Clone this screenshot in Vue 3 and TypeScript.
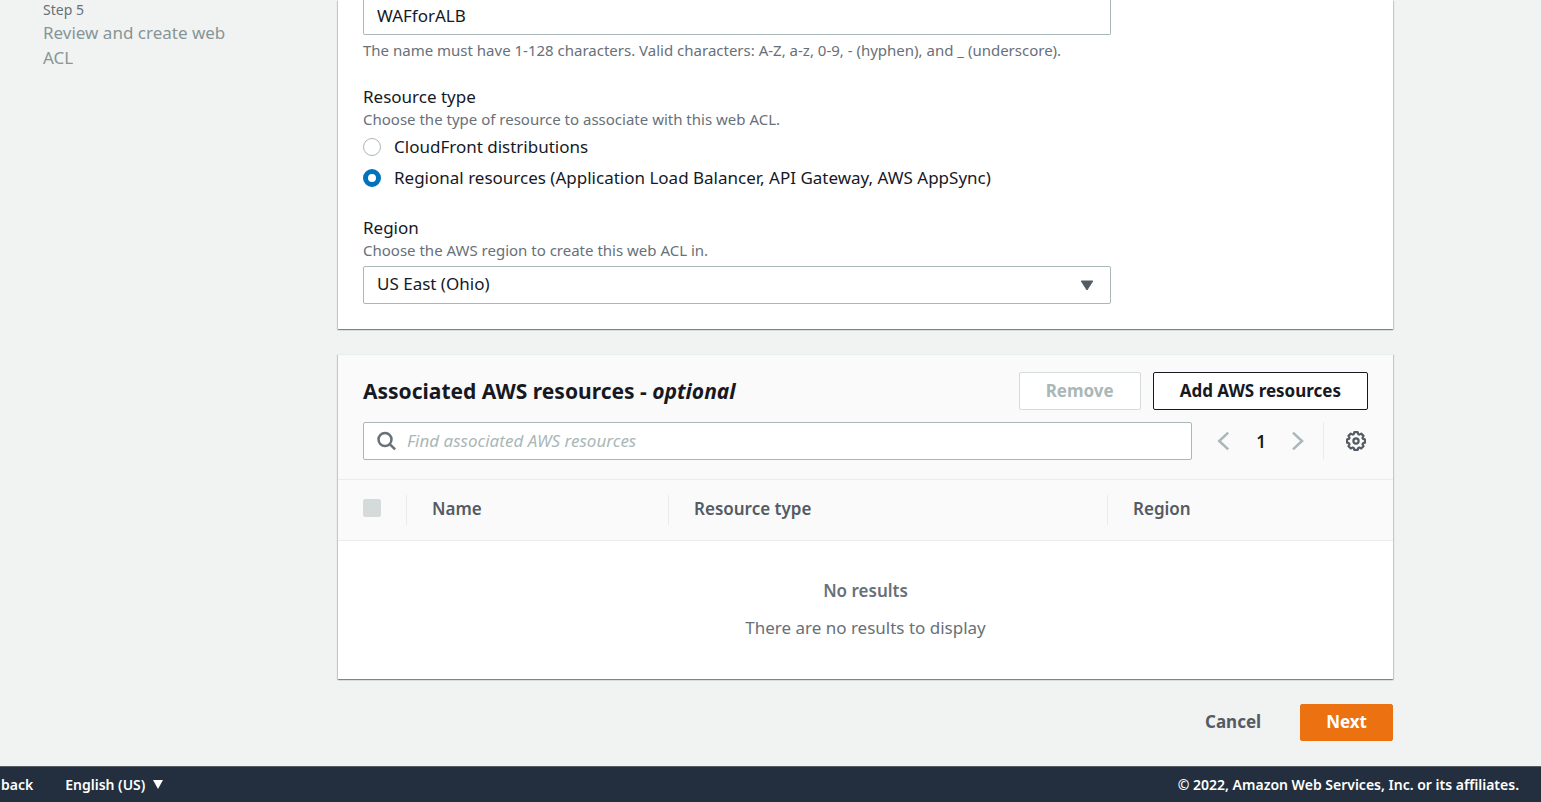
<script setup lang="ts">
import { ref } from 'vue'

interface ResourceOption {
  value: string
  label: string
}

const aclName = ref('WAFforALB')
const resourceType = ref('regional')
const region = ref('us-east-2')
const query = ref('')

const resourceOptions: ResourceOption[] = [
  { value: 'cloudfront', label: 'CloudFront distributions' },
  { value: 'regional', label: 'Regional resources (Application Load Balancer, API Gateway, AWS AppSync)' },
]
</script>

<template>
  <div class="shell">
    <div class="body">
      <nav class="steps" aria-label="Steps">
        <div class="step-number">Step 5</div>
        <div class="step-title">Review and create web ACL</div>
      </nav>

      <main class="content">
        <section class="panel details">
          <div class="form">
            <div class="field">
              <input v-model="aclName" class="text-input cut" type="text" aria-label="Name" aria-describedby="name-hint" />
              <p id="name-hint" class="hint name-hint">
                The name must have 1-128 characters. Valid characters: A-Z, a-z, 0-9, - (hyphen), and _ (underscore).
              </p>
            </div>

            <div class="field" role="radiogroup" aria-labelledby="type-label">
              <div id="type-label" class="label">Resource type</div>
              <p class="hint">Choose the type of resource to associate with this web ACL.</p>
              <div class="radios">
                <label v-for="option in resourceOptions" :key="option.value" class="radio">
                  <input v-model="resourceType" type="radio" name="resource-type" :value="option.value" />
                  <span>{{ option.label }}</span>
                </label>
              </div>
            </div>

            <div class="field">
              <label class="label" for="region">Region</label>
              <p class="hint">Choose the AWS region to create this web ACL in.</p>
              <div class="select-box">
                <select id="region" v-model="region">
                  <option value="us-east-2">US East (Ohio)</option>
                </select>
                <svg class="caret" viewBox="0 0 14 11" aria-hidden="true">
                  <path d="M1.2 1h11.6L7 10z" fill="#545b64" stroke="#545b64" stroke-linejoin="round" />
                </svg>
              </div>
            </div>
          </div>
        </section>

        <section class="panel">
          <header class="panel-header">
            <div class="title-row">
              <h2>Associated AWS resources - <i>optional</i></h2>
              <div class="actions">
                <button class="button" type="button" disabled>Remove</button>
                <button class="button strong" type="button">Add AWS resources</button>
              </div>
            </div>
            <div class="tools">
              <div class="search">
                <svg class="search-icon" viewBox="0 0 20 20" aria-hidden="true">
                  <circle cx="8" cy="8.5" r="6.5" />
                  <path d="M12.700 13.200l5.400 5.200" />
                </svg>
                <input v-model="query" type="text" placeholder="Find associated AWS resources" aria-label="Find associated AWS resources" />
              </div>
              <div class="pager">
                <button class="icon-button" type="button" aria-label="Previous page" disabled>
                  <svg viewBox="0 0 20 20"><path d="M14.2 1.6L5.2 10l9 8.4" /></svg>
                </button>
                <button class="page" type="button">1</button>
                <button class="icon-button" type="button" aria-label="Next page" disabled>
                  <svg viewBox="0 0 20 20"><path d="M5 1.6l9 8.4-9 8.4" /></svg>
                </button>
              </div>
              <div class="settings">
                <button class="icon-button gear" type="button" aria-label="Preferences">
                  <svg viewBox="0 0 20 20">
                    <path d="M8.300 1.200h3.400l.6 2 1 .4 1.900-1 2.300 2.300-1 1.900.4 1 2 .6v3.300l-2 .6-.4 1 1 1.900-2.300 2.300-1.900-1-1 .4-.6 2H8.300l-.6-2-1-.4-1.900 1-2.300-2.300 1-1.900-.4-1-2-.6V8.400l2-.6.4-1-1-1.900L4.800 2.600l1.900 1 1-.4z" />
                    <circle cx="10" cy="10" r="2.6" />
                  </svg>
                </button>
              </div>
            </div>
          </header>

          <table>
            <thead>
              <tr>
                <th class="col-check"><input type="checkbox" aria-label="Select all" disabled /></th>
                <th class="col-name"><div>Name</div></th>
                <th class="col-type"><div>Resource type</div></th>
                <th><div>Region</div></th>
              </tr>
            </thead>
            <tbody>
              <tr>
                <td colspan="4">
                  <b>No results</b>
                  <p>There are no results to display</p>
                </td>
              </tr>
            </tbody>
          </table>
        </section>

        <div class="wizard-actions">
          <button class="button link" type="button">Cancel</button>
          <button class="button primary" type="button">Next</button>
        </div>
      </main>
    </div>

    <footer class="footer">
      <a href="#">back</a>
      <button class="language" type="button">
        English (US)
        <svg viewBox="0 0 10 9" aria-hidden="true"><path d="M0 0h10L5 9z" fill="#fff" /></svg>
      </button>
      <span class="copyright">© 2022, Amazon Web Services, Inc. or its affiliates.</span>
    </footer>
  </div>
</template>

<style>
body {
  margin: 0;
  background: #f1f3f3;
}
</style>

<style scoped>
* {
  box-sizing: border-box;
}

.shell {
  display: flex;
  flex-direction: column;
  min-height: 100vh;
  color: #16191f;
  font-family: 'Noto Sans', 'Open Sans', sans-serif;
  font-size: 17px;
  line-height: 25px;
}

input,
select,
button {
  font: inherit;
  color: inherit;
}

button {
  cursor: pointer;
}

p {
  margin: 0;
}

.body {
  display: flex;
  flex: 1;
  padding: 0 148px 25px 43px;
}

.steps {
  flex: none;
  width: 200px;
  margin-right: 95px;
  color: #879596;
}

.step-number {
  color: #687078;
  font-size: 14px;
  line-height: 20px;
}

.content {
  flex: 1;
  min-width: 0;
}

.panel {
  background: #fff;
  box-shadow: 0 1px 1px 0 rgba(0, 28, 36, 0.3), 1px 1px 1px 0 rgba(0, 28, 36, 0.15), -1px 1px 1px 0 rgba(0, 28, 36, 0.15);
}

.details {
  margin-bottom: 25px;
  padding: 0 25px 25px;
}

.form {
  display: flex;
  flex-direction: column;
  gap: 25px;
  max-width: 748px;
}

.label {
  display: block;
  line-height: 24px;
}

.hint {
  color: #687078;
  font-size: 15px;
  line-height: 20px;
}

.name-hint {
  margin-top: 5px;
}

.text-input {
  display: block;
  width: 100%;
  height: 38px;
  padding: 0 13px;
  border: 1px solid #aab7b8;
  border-radius: 2px;
  background: #fff;
}

.text-input.cut {
  height: 35px;
  padding-bottom: 4px;
  border-top: 0;
  border-radius: 0 0 2px 2px;
}

.radios {
  display: flex;
  flex-direction: column;
  gap: 6px;
  padding: 5px 0 1px;
}

.radio {
  display: flex;
  align-items: center;
  gap: 13px;
}

.radio input {
  appearance: none;
  flex: none;
  width: 18px;
  height: 18px;
  margin: 0;
  border: 1px solid #aab7b8;
  border-radius: 50%;
  background: #fff;
}

.radio input:checked {
  border: 5px solid #0073bb;
}

.select-box {
  display: grid;
  align-items: center;
  margin-top: 6px;
}

.select-box select {
  grid-area: 1 / 1;
  appearance: none;
  width: 100%;
  height: 38px;
  padding: 0 13px 3px;
  border: 1px solid #aab7b8;
  border-radius: 2px;
  background: #fff;
}

.caret {
  grid-area: 1 / 1;
  justify-self: end;
  width: 14px;
  height: 11px;
  margin-right: 17px;
  pointer-events: none;
}

.panel-header {
  padding: 17px 25px 19px;
  border-top: 1px solid #eaeded;
  border-bottom: 1px solid #eaeded;
  background: #fafafa;
}

.title-row {
  display: flex;
  align-items: center;
  justify-content: space-between;
}

h2 {
  margin: 0;
  font-size: 21px;
  font-weight: 700;
  line-height: 28px;
}

.actions {
  display: flex;
  gap: 12px;
}

.button {
  height: 38px;
  padding: 0 26px 2px;
  border: 1px solid #545b64;
  border-radius: 2px;
  background: #fff;
  color: #545b64;
  font-weight: 700;
}

.button:disabled {
  border-color: #d5dbdb;
  color: #aab7b8;
}

.button.strong {
  border-color: #16191f;
  color: #16191f;
}

.button.link {
  border-color: transparent;
  background: transparent;
}

.button.primary {
  padding: 0 25px 2px;
  border-color: #ec7211;
  background: #ec7211;
  color: #fff;
}

.tools {
  display: flex;
  align-items: center;
  margin-top: 12px;
}

.search {
  display: flex;
  flex: 1;
  align-items: center;
  gap: 10px;
  height: 38px;
  padding: 0 13px;
  border: 1px solid #aab7b8;
  border-radius: 2px;
  background: #fff;
}

.search-icon {
  width: 20px;
  height: 20px;
  fill: none;
  stroke: #687078;
  stroke-width: 2.5;
}

.search input {
  flex: 1;
  min-width: 0;
  padding: 0 0 2px;
  border: 0;
  outline: 0;
  background: transparent;
}

.search input::placeholder {
  color: #aab7b8;
  font-style: italic;
  opacity: 1;
}

.pager {
  display: flex;
  align-items: center;
  gap: 17px;
  padding: 0 15px 0 22px;
}

.icon-button {
  width: 20px;
  height: 20px;
  padding: 0;
  border: 0;
  background: none;
}

.icon-button svg {
  display: block;
  width: 20px;
  height: 20px;
  fill: none;
  stroke: #aab7b8;
  stroke-width: 2.5;
}

.icon-button.gear svg {
  stroke: #545b64;
  stroke-width: 2.2;
  stroke-linejoin: round;
}

.page {
  width: 20px;
  padding: 0;
  border: 0;
  background: none;
  font-weight: 600;
}

.settings {
  display: flex;
  align-items: center;
  height: 38px;
  padding: 0 2px 0 22px;
  border-left: 1px solid #eaeded;
}

table {
  width: 100%;
  border-collapse: separate;
  border-spacing: 0;
  table-layout: fixed;
}

th {
  height: 61px;
  padding: 0;
  border-bottom: 1px solid #eaeded;
  background: #fafafa;
  color: #545b64;
  font-weight: 600;
  text-align: left;
}

th div {
  height: 30px;
  padding-left: 25px;
  border-left: 1px solid #eaeded;
  line-height: 28px;
}

.col-check {
  width: 68px;
  padding-left: 25px;
}

.col-name {
  width: 262px;
}

.col-type {
  width: 439px;
}

th input {
  appearance: none;
  display: block;
  width: 18px;
  height: 18px;
  margin: 0 0 4px;
  border-radius: 2px;
  background: #d5dbdb;
}

td {
  padding: 37px 0 39px;
  color: #687078;
  text-align: center;
}

td b {
  font-weight: 600;
}

td p {
  margin-top: 12px;
}

.wizard-actions {
  display: flex;
  justify-content: flex-end;
  gap: 12px;
  padding-top: 25px;
}

.wizard-actions .button {
  height: 37px;
}

.footer {
  display: flex;
  align-items: center;
  height: 36px;
  padding: 0 22px 0 1px;
  border-top: 1px solid #545b64;
  background: #232f3e;
  color: #fff;
  font-size: 14px;
  font-weight: 600;
}

.footer a {
  color: inherit;
  text-decoration: none;
}

.language {
  display: flex;
  align-items: center;
  gap: 8px;
  margin-left: 32px;
  padding: 0;
  border: 0;
  background: none;
}

.language svg {
  width: 10px;
  height: 9px;
}

.copyright {
  margin-left: auto;
}
</style>
